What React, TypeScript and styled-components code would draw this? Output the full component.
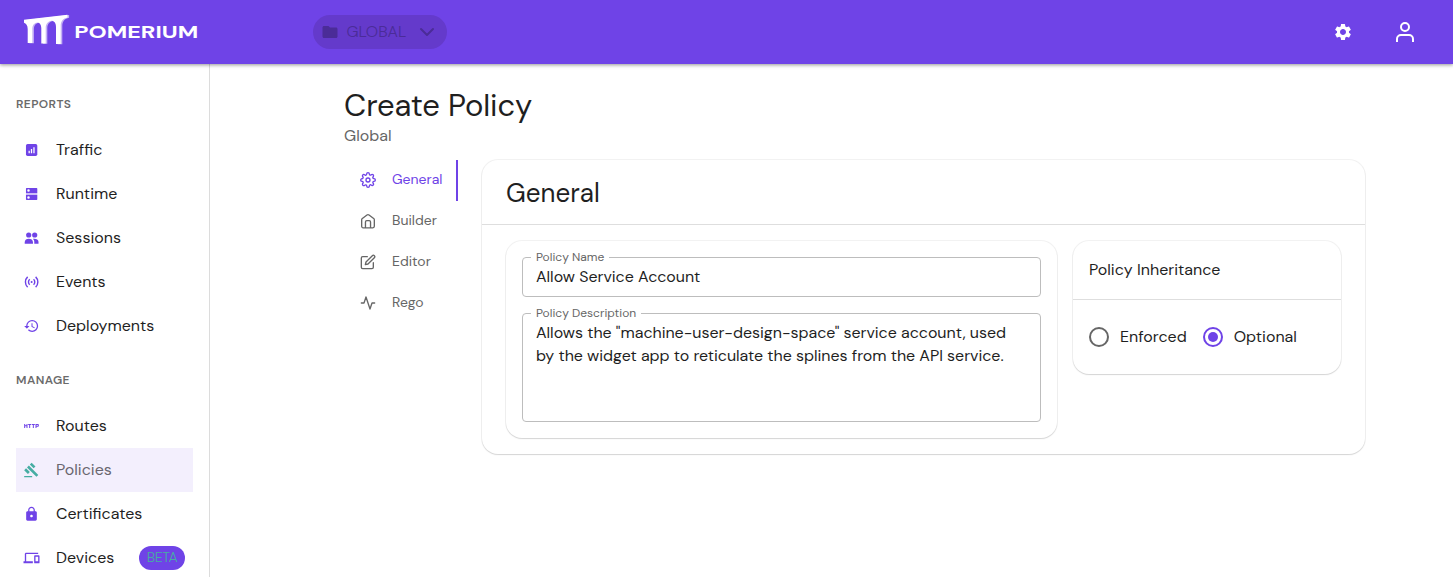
import React from 'react';
import styled, { createGlobalStyle } from 'styled-components';
import { MdHistory, MdHttp, MdGavel, MdLock, MdDevices, MdSettings, MdFolder } from 'react-icons/md';
import { FiActivity, FiChevronDown, FiEdit, FiSettings } from 'react-icons/fi';

const violet = '#6f43e7';

const GlobalStyle = createGlobalStyle`
  *, *::before, *::after { box-sizing: border-box; }
  html, body { margin: 0; height: 100%; overflow: hidden; }
  body {
    background: #fff;
    color: #1f1f1f;
    font-family: "DM Sans", Inter, "Liberation Sans", sans-serif;
    font-size: 16px;
    line-height: 24px;
  }
  h1, h2, h3, p { margin: 0; font-size: inherit; font-weight: 400; }
`;

const Page = styled.div`
  display: flex;
  flex-direction: column;
  height: 577px;
  overflow: hidden;
`;

const Header = styled.header`
  display: flex;
  align-items: center;
  flex: 0 0 64px;
  padding: 0 36px 0 24px;
  background: ${violet};
  box-shadow: 0 1px 3px rgba(0, 0, 0, 0.3), 0 2px 4px rgba(0, 0, 0, 0.1);
  z-index: 1;
`;

const Logo = styled.svg`
  display: block;
  width: 176px;
  height: 34px;
  margin-right: 113px;
  overflow: visible;
  text { font: 700 18px "DM Sans", Inter, sans-serif; fill: #fff; }
`;

const NamespaceButton = styled.button`
  display: flex;
  align-items: center;
  width: 134px;
  height: 34px;
  padding: 0 8px;
  border: 0;
  border-radius: 17px;
  background: #643acb;
  color: #4b2c98;
  font: 300 16px "DM Sans", Inter, sans-serif;
  span { flex: 1; text-align: left; padding: 0 0 2px 7.5px; }
`;

const HeaderActions = styled.div`
  display: flex;
  align-items: center;
  gap: 40px;
  margin-left: auto;
  color: #fff;
  svg { display: block; }
`;

const Body = styled.div`
  display: flex;
  flex: 1;
  min-height: 0;
`;

const Sidebar = styled.nav`
  flex: 0 0 210px;
  padding: 24px 16px 0;
  border-right: 1px solid #dcdcdc;
  overflow: hidden;
`;

const NavSection = styled.section`
  margin-bottom: 16px;
`;

const NavHeading = styled.h3`
  height: 32px;
  margin-bottom: 8px;
  font-size: 12px;
  line-height: 32px;
  font-weight: 600;
  letter-spacing: 0.4px;
  color: #6b6b6b;
`;

const NavItem = styled.a<{ $active?: boolean }>`
  display: flex;
  align-items: center;
  height: 44px;
  padding: 0 8px 0 7px;
  background: ${p => (p.$active ? '#f3effd' : 'transparent')};
  color: ${p => (p.$active ? '#69666f' : '#1f1f1f')};
  svg { flex: none; width: 17px; height: 16px; margin-right: 16px; color: ${p => (p.$active ? '#46ada3' : violet)}; }
`;

const BetaChip = styled.span`
  width: 46px;
  height: 24px;
  margin-left: auto;
  border-radius: 12px;
  background: ${violet};
  color: #46ada3;
  font-size: 14px;
  line-height: 23px;
  font-weight: 300;
  letter-spacing: -0.4px;
  text-align: center;
`;

const Content = styled.main`
  flex: 1;
  padding: 24px 88px 0 134px;
`;

const PageTitle = styled.h1`
  font-size: 31px;
  line-height: 36px;
  letter-spacing: -0.1px;
`;

const PageSubtitle = styled.p`
  height: 36px;
  color: #666;
`;

const Columns = styled.div`
  display: flex;
  align-items: flex-start;
`;

const Tabs = styled.div`
  display: flex;
  flex-direction: column;
  flex: 0 0 114px;
  margin-right: 24px;
`;

const Tab = styled.a<{ $active?: boolean }>`
  display: flex;
  align-items: center;
  height: 41px;
  padding: 0 0 3px 16px;
  border-right: 2px solid ${p => (p.$active ? violet : 'transparent')};
  color: ${p => (p.$active ? violet : '#666')};
  font-size: 14px;
  svg { flex: none; width: 16px; height: 16px; margin: 2px 16px 0 0; }
`;

const Card = styled.section`
  border-radius: 16px;
  background: #fff;
  box-shadow: 0 0 0 1px rgba(0, 0, 0, 0.05), 0 1px 1px rgba(0, 0, 0, 0.07), 0 1px 2px rgba(0, 0, 0, 0.06);
`;

const MainCard = styled(Card)`
  flex: 1;
  height: 294px;
`;

const MainCardTitle = styled.h2`
  height: 65px;
  padding-left: 24px;
  border-bottom: 1px solid #dedede;
  font-size: 26px;
  line-height: 66px;
`;

const MainCardBody = styled.div`
  display: flex;
  align-items: flex-start;
  gap: 16px;
  padding: 16px 24px;
`;

const DetailsCard = styled(Card)`
  display: flex;
  flex-direction: column;
  gap: 16px;
  flex: 1;
  height: 197px;
  padding: 16px;
`;

const Field = styled.fieldset<{ $height: number }>`
  height: ${p => p.$height}px;
  min-width: 0;
  margin: -7px 0 0;
  padding: 1px 13px 0;
  border: 1px solid #bdbdbd;
  border-radius: 4px;
`;

const FieldLabel = styled.legend`
  height: 14px;
  margin-left: -5px;
  padding: 0 5px;
  color: #666;
  font-size: 12px;
  line-height: 14px;
`;

const FieldLine = styled.p`
  height: 23px;
  line-height: 23px;
  white-space: nowrap;
  letter-spacing: -0.035px;
`;

const InheritanceCard = styled(Card)`
  flex: 0 0 268px;
  height: 133px;
`;

const InheritanceTitle = styled.h3`
  height: 59px;
  padding-left: 16px;
  border-bottom: 1px solid #dedede;
  line-height: 58px;
`;

const RadioGroup = styled.div`
  display: flex;
  align-items: center;
  height: 74px;
  padding-left: 16px;
  gap: 16px;
`;

const RadioOption = styled.label`
  display: flex;
  align-items: center;
  gap: 11px;
`;

const RadioMark = styled.span<{ $checked?: boolean }>`
  display: flex;
  align-items: center;
  justify-content: center;
  width: 20px;
  height: 20px;
  border: 2px solid ${p => (p.$checked ? violet : '#666')};
  border-radius: 50%;
  &::after {
    content: '';
    width: 10px;
    height: 10px;
    border-radius: 50%;
    background: ${p => (p.$checked ? violet : 'transparent')};
  }
`;

const TrafficIcon = () => (
  <svg viewBox="0 0 24 24">
    <rect x="3.700" y="3" width="17" height="18" rx="2.500" fill="currentColor" />
    <path d="M8.500 16.800v-3.500M12 16.800v-6.200M15.700 16.800V7.800" stroke="#fff" strokeWidth="1.900" />
  </svg>
);

const RuntimeIcon = () => (
  <svg viewBox="0 0 24 24" fill="currentColor">
    <path fillRule="evenodd" d="M4.700 3h15a1 1 0 0 1 1 1v6.500h-17V4a1 1 0 0 1 1-1ZM7.500 4.800a1.900 1.900 0 1 0 0 3.800 1.900 1.900 0 0 0 0-3.800ZM3.700 13.500h17V20a1 1 0 0 1-1 1h-15a1 1 0 0 1-1-1ZM7.500 15.300a1.900 1.900 0 1 0 0 3.800 1.900 1.900 0 0 0 0-3.800Z" />
    <path opacity=".35" d="M3.700 10.500h17v3h-17Z" />
  </svg>
);

const SessionsIcon = () => (
  <svg viewBox="0 0 24 24" fill="currentColor">
    <circle cx="7.800" cy="7.500" r="3.900" />
    <circle cx="16.800" cy="7.500" r="3.900" />
    <path d="M1.800 20.500v-2.300c0-3.200 3-5 6.200-5s6.200 1.800 6.200 5v2.300ZM16.200 20.500v-2.600c0-1.900-.8-3.400-2.200-4.600 4-.9 8.500.8 8.500 4.500v2.700Z" />
  </svg>
);

const EventsIcon = () => (
  <svg viewBox="0 0 24 24" fill="none" stroke="currentColor" strokeWidth="2.100">
    <path d="M6.200 4.300a10.600 10.600 0 0 0 0 15.400M9.300 8a5.300 5.300 0 0 0 0 8M18.200 4.300a10.600 10.600 0 0 1 0 15.400M15.100 8a5.300 5.300 0 0 1 0 8" />
    <circle cx="12.200" cy="12" r="1.500" fill="currentColor" stroke="none" />
  </svg>
);

const HomeIcon = () => (
  <svg viewBox="0 0 24 24" fill="none" stroke="currentColor" strokeWidth="2" strokeLinecap="round" strokeLinejoin="round">
    <path d="M8.200 22v-8.500a2 2 0 0 1 2-2h3.600a2 2 0 0 1 2 2V22M2.500 10.200V20a2.200 2.200 0 0 0 2.200 2.200h14.600a2.200 2.200 0 0 0 2.200-2.200v-9.800a2.500 2.500 0 0 0-1-2L13.500 2.900a2.500 2.500 0 0 0-3 0L3.500 8.200a2.500 2.500 0 0 0-1 2Z" />
  </svg>
);

const UserIcon = () => (
  <svg width="24" height="24" viewBox="0 0 24 24" fill="none" stroke="#fff" strokeWidth="2">
    <circle cx="12" cy="7" r="4" />
    <path d="M4 22v-3a4 4 0 0 1 4-4h8a4 4 0 0 1 4 4v3" />
  </svg>
);

const aqueduct =
  'M0 4.700 43.500-.3V2.500C39 3.500 36.700 6 36.700 11V29H32V12C32 8 30 5.800 27.500 5.800 24 6.200 21.700 9 21.700 13V28.500H17.300V13C17.300 9.500 15.500 7.500 13.500 7.500 10.500 7.800 8.300 10 8.300 14V28H3.700V14C3.700 10.500 2 8.500 0 7.800Z';

const PomeriumLogo = () => (
  <Logo viewBox="0 0 176 34">
    <path fill="#c5b3f5" d={aqueduct} transform="translate(1.600 0.200)" />
    <path fill="#fff" d={aqueduct} />
    <text x="50.300" y="22.700" textLength="124" lengthAdjust="spacingAndGlyphs">POMERIUM</text>
  </Logo>
);

const reports = [
  { label: 'Traffic', icon: <TrafficIcon /> },
  { label: 'Runtime', icon: <RuntimeIcon /> },
  { label: 'Sessions', icon: <SessionsIcon /> },
  { label: 'Events', icon: <EventsIcon /> },
  { label: 'Deployments', icon: <MdHistory /> },
];

const manage = [
  { label: 'Routes', icon: <MdHttp /> },
  { label: 'Policies', icon: <MdGavel />, active: true },
  { label: 'Certificates', icon: <MdLock /> },
  { label: 'Devices', icon: <MdDevices />, beta: true },
];

export default function App() {
  return (
    <Page>
      <GlobalStyle />
      <Header>
        <PomeriumLogo />
        <NamespaceButton>
          <MdFolder size={18} />
          <span>GLOBAL</span>
          <FiChevronDown size={24} />
        </NamespaceButton>
        <HeaderActions>
          <MdSettings size={20} />
          <UserIcon />
        </HeaderActions>
      </Header>
      <Body>
        <Sidebar>
          <NavSection>
            <NavHeading>REPORTS</NavHeading>
            {reports.map(i => (
              <NavItem key={i.label}>{i.icon}{i.label}</NavItem>
            ))}
          </NavSection>
          <NavSection>
            <NavHeading>MANAGE</NavHeading>
            {manage.map(i => (
              <NavItem key={i.label} $active={i.active}>
                {i.icon}{i.label}{i.beta && <BetaChip>BETA</BetaChip>}
              </NavItem>
            ))}
          </NavSection>
        </Sidebar>
        <Content>
          <PageTitle>Create Policy</PageTitle>
          <PageSubtitle>Global</PageSubtitle>
          <Columns>
            <Tabs>
              <Tab $active><FiSettings />General</Tab>
              <Tab><HomeIcon />Builder</Tab>
              <Tab><FiEdit />Editor</Tab>
              <Tab><FiActivity />Rego</Tab>
            </Tabs>
            <MainCard>
              <MainCardTitle>General</MainCardTitle>
              <MainCardBody>
                <DetailsCard>
                  <Field $height={47}>
                    <FieldLabel>Policy Name</FieldLabel>
                    <FieldLine>Allow Service Account</FieldLine>
                  </Field>
                  <Field $height={116}>
                    <FieldLabel>Policy Description</FieldLabel>
                    <FieldLine>Allows the "machine-user-design-space" service account, used</FieldLine>
                    <FieldLine>by the widget app to reticulate the splines from the API service.</FieldLine>
                  </Field>
                </DetailsCard>
                <InheritanceCard>
                  <InheritanceTitle>Policy Inheritance</InheritanceTitle>
                  <RadioGroup>
                    <RadioOption><RadioMark />Enforced</RadioOption>
                    <RadioOption><RadioMark $checked />Optional</RadioOption>
                  </RadioGroup>
                </InheritanceCard>
              </MainCardBody>
            </MainCard>
          </Columns>
        </Content>
      </Body>
    </Page>
  );
}
